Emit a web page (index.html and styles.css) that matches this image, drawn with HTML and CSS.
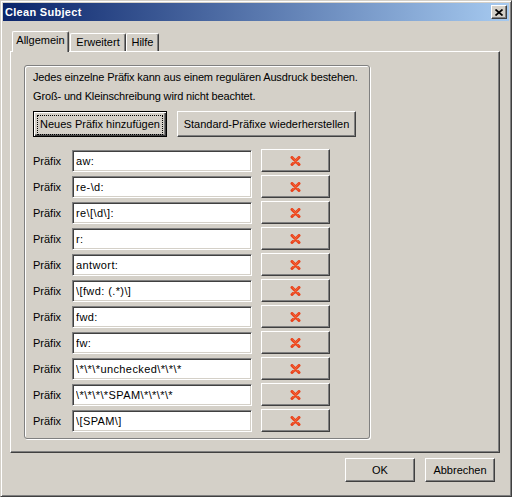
FILE: index.html
```html
<!DOCTYPE html>
<html lang="de">
<head>
  <meta charset="UTF-8">
  <title>Clean Subject</title>
  <link rel="stylesheet" href="styles.css">
</head>
<body>

  <div class="window">
    <div class="titlebar">
      <span class="title">Clean Subject</span>
      <button class="close-btn" title="Schließen">
        <svg width="8" height="7" viewBox="0 0 8 7"><path d="M0.5 0.5 L7.5 6.5 M7.5 0.5 L0.5 6.5" stroke="#000" stroke-width="1.7"/></svg>
      </button>
    </div>

    <div class="dialog">
      <div class="tabs">
        <div class="tab selected tab-allgemein">Allgemein</div>
        <div class="tab tab-erweitert">Erweitert</div>
        <div class="tab tab-hilfe">Hilfe</div>
      </div>

      <div class="panel">
        <div class="groupbox">
          <p class="hint">Jedes einzelne Präfix kann aus einem regulären Ausdruck bestehen.<br>Groß- und Kleinschreibung wird nicht beachtet.</p>

          <div class="actions">
            <button class="btn btn-focus"><span>Neues Präfix hinzufügen</span></button>
            <button class="btn btn-restore">Standard-Präfixe wiederherstellen</button>
          </div>

          <div class="prefix-list" id="prefixList"></div>
        </div>
      </div>

      <div class="footer">
        <button class="btn btn-dialog">OK</button>
        <button class="btn btn-dialog">Abbrechen</button>
      </div>
    </div>
  </div>

  <script>
    const prefixes = [
      "aw:",
      "re-\\d:",
      "re\\[\\d\\]:",
      "r:",
      "antwort:",
      "\\[fwd: (.*)\\]",
      "fwd:",
      "fw:",
      "\\*\\*\\*unchecked\\*\\*\\*",
      "\\*\\*\\*\\*SPAM\\*\\*\\*\\*",
      "\\[SPAM\\]"
    ];

    const list = document.getElementById("prefixList");
    const deleteIcon = '<svg width="11" height="10" viewBox="0 0 11 10">' +
      '<path d="M2 1.5 L9 8.5 M9 1.5 L2 8.5" stroke="#e8421c" stroke-width="3" stroke-linecap="round"/>' +
      '<path d="M2.5 1.5 L8.5 8 M8.5 1.5 L2.5 8" stroke="#f7683a" stroke-width="1"/></svg>';

    prefixes.forEach(function(value) {
      const row = document.createElement("div");
      row.className = "prefix-row";
      row.innerHTML =
        '<label class="prefix-label">Präfix</label>' +
        '<input class="prefix-input" type="text">' +
        '<button class="btn btn-delete">' + deleteIcon + '</button>';
      row.querySelector("input").value = value;
      row.querySelector(".btn-delete").addEventListener("click", function() {
        row.remove();
      });
      list.appendChild(row);
    });
  </script>

</body>
</html>
```

FILE: styles.css
```css
/* Classic dialog look */
body {
  margin: 0;
  background: #d4d0c8;
  font-family: "Liberation Sans", Arial, sans-serif;
  font-size: 11px;
  color: #000;
}

.window {
  width: 512px;
  height: 497px;
  box-sizing: border-box;
  border: 1px solid;
  border-color: #d4d0c8 #404040 #404040 #d4d0c8;
  box-shadow: inset 1px 1px 0 #fff, inset -1px -1px 0 #808080;
  padding: 2px;
  background: #d4d0c8;
}

/* Title bar */
.titlebar {
  height: 18px;
  display: flex;
  align-items: center;
  padding: 0 2px 0 2px;
  background: linear-gradient(to right, #0a246a, #a6caf0);
}

.title {
  color: #fff;
  font-weight: bold;
  font-size: 11px;
  letter-spacing: 0.3px;
}

.close-btn {
  margin-left: auto;
  width: 16px;
  height: 14px;
  padding: 0;
  display: flex;
  align-items: center;
  justify-content: center;
  background: #d4d0c8;
  border: 1px solid;
  border-color: #fff #404040 #404040 #fff;
  box-shadow: inset -1px -1px 0 #808080;
}

.dialog {
  padding: 10px 9px 0 7px;
}

/* Tabs */
.tabs {
  height: 20px;
  display: flex;
  align-items: flex-end;
  padding-left: 2px;
}

.tab {
  box-sizing: border-box;
  height: 18px;
  line-height: 17px;
  text-align: center;
  border-top: 1px solid #fff;
  border-left: 1px solid #fff;
  border-right: 1px solid #404040;
  box-shadow: inset -1px 0 0 #808080;
  border-radius: 2px 2px 0 0;
  background: #d4d0c8;
}

.tab.selected {
  height: 21px;
  line-height: 16px;
  margin-bottom: -1px;
  position: relative;
  z-index: 1;
}

.tab-allgemein { width: 57px; }
.tab-erweitert { width: 56px; margin-left: 1px; }
.tab-hilfe { width: 33px; }

/* Tab panel */
.panel {
  box-sizing: border-box;
  height: 402px;
  border: 1px solid;
  border-color: #fff #404040 #404040 #fff;
  box-shadow: inset -1px -1px 0 #808080;
  padding: 13px 0 0 13px;
}

.groupbox {
  box-sizing: border-box;
  width: 346px;
  height: 374px;
  border: 1px solid #808080;
  border-radius: 3px;
  box-shadow: 1px 1px 0 #fff, inset 1px 1px 0 #fff;
  padding: 2px 0 0 8px;
}

.hint {
  margin: 0;
  line-height: 19px;
  letter-spacing: -0.15px;
}

.actions {
  display: flex;
  gap: 10px;
  margin-top: 5px;
}

/* Buttons */
.btn {
  box-sizing: border-box;
  font-family: inherit;
  font-size: 11px;
  color: #000;
  background: #d4d0c8;
  border: 1px solid;
  border-color: #fff #404040 #404040 #fff;
  box-shadow: inset -1px -1px 0 #808080;
  padding: 0;
  cursor: pointer;
}

.btn-focus {
  width: 134px;
  height: 26px;
  border: 1px solid #000;
  box-shadow: inset 1px 1px 0 #fff, inset -1px -1px 0 #404040, inset -2px -2px 0 #808080;
  padding: 3px;
}

.btn-focus span {
  display: block;
  height: 18px;
  line-height: 16px;
  border: 1px dotted #000;
}

.btn-restore {
  width: 179px;
  height: 26px;
}

/* Prefix rows */
.prefix-list {
  margin-top: 12px;
  display: flex;
  flex-direction: column;
  gap: 3px;
}

.prefix-row {
  display: flex;
  align-items: center;
  height: 23px;
}

.prefix-label {
  width: 39px;
}

.prefix-input {
  box-sizing: border-box;
  width: 180px;
  height: 22px;
  margin: 1px 0 0 0;
  padding: 0 3px;
  font-family: inherit;
  font-size: 11px;
  letter-spacing: 0.4px;
  color: #000;
  background: #fff;
  border: 1px solid;
  border-color: #808080 #fff #fff #808080;
  box-shadow: inset 1px 1px 0 #404040, inset -1px -1px 0 #d4d0c8;
  outline: none;
}

.btn-delete {
  width: 69px;
  height: 23px;
  margin-left: 9px;
  display: flex;
  align-items: center;
  justify-content: center;
}

/* Footer */
.footer {
  display: flex;
  justify-content: flex-end;
  gap: 10px;
  margin-top: 5px;
  padding-right: 5px;
}

.btn-dialog {
  width: 70px;
  height: 24px;
}
```
